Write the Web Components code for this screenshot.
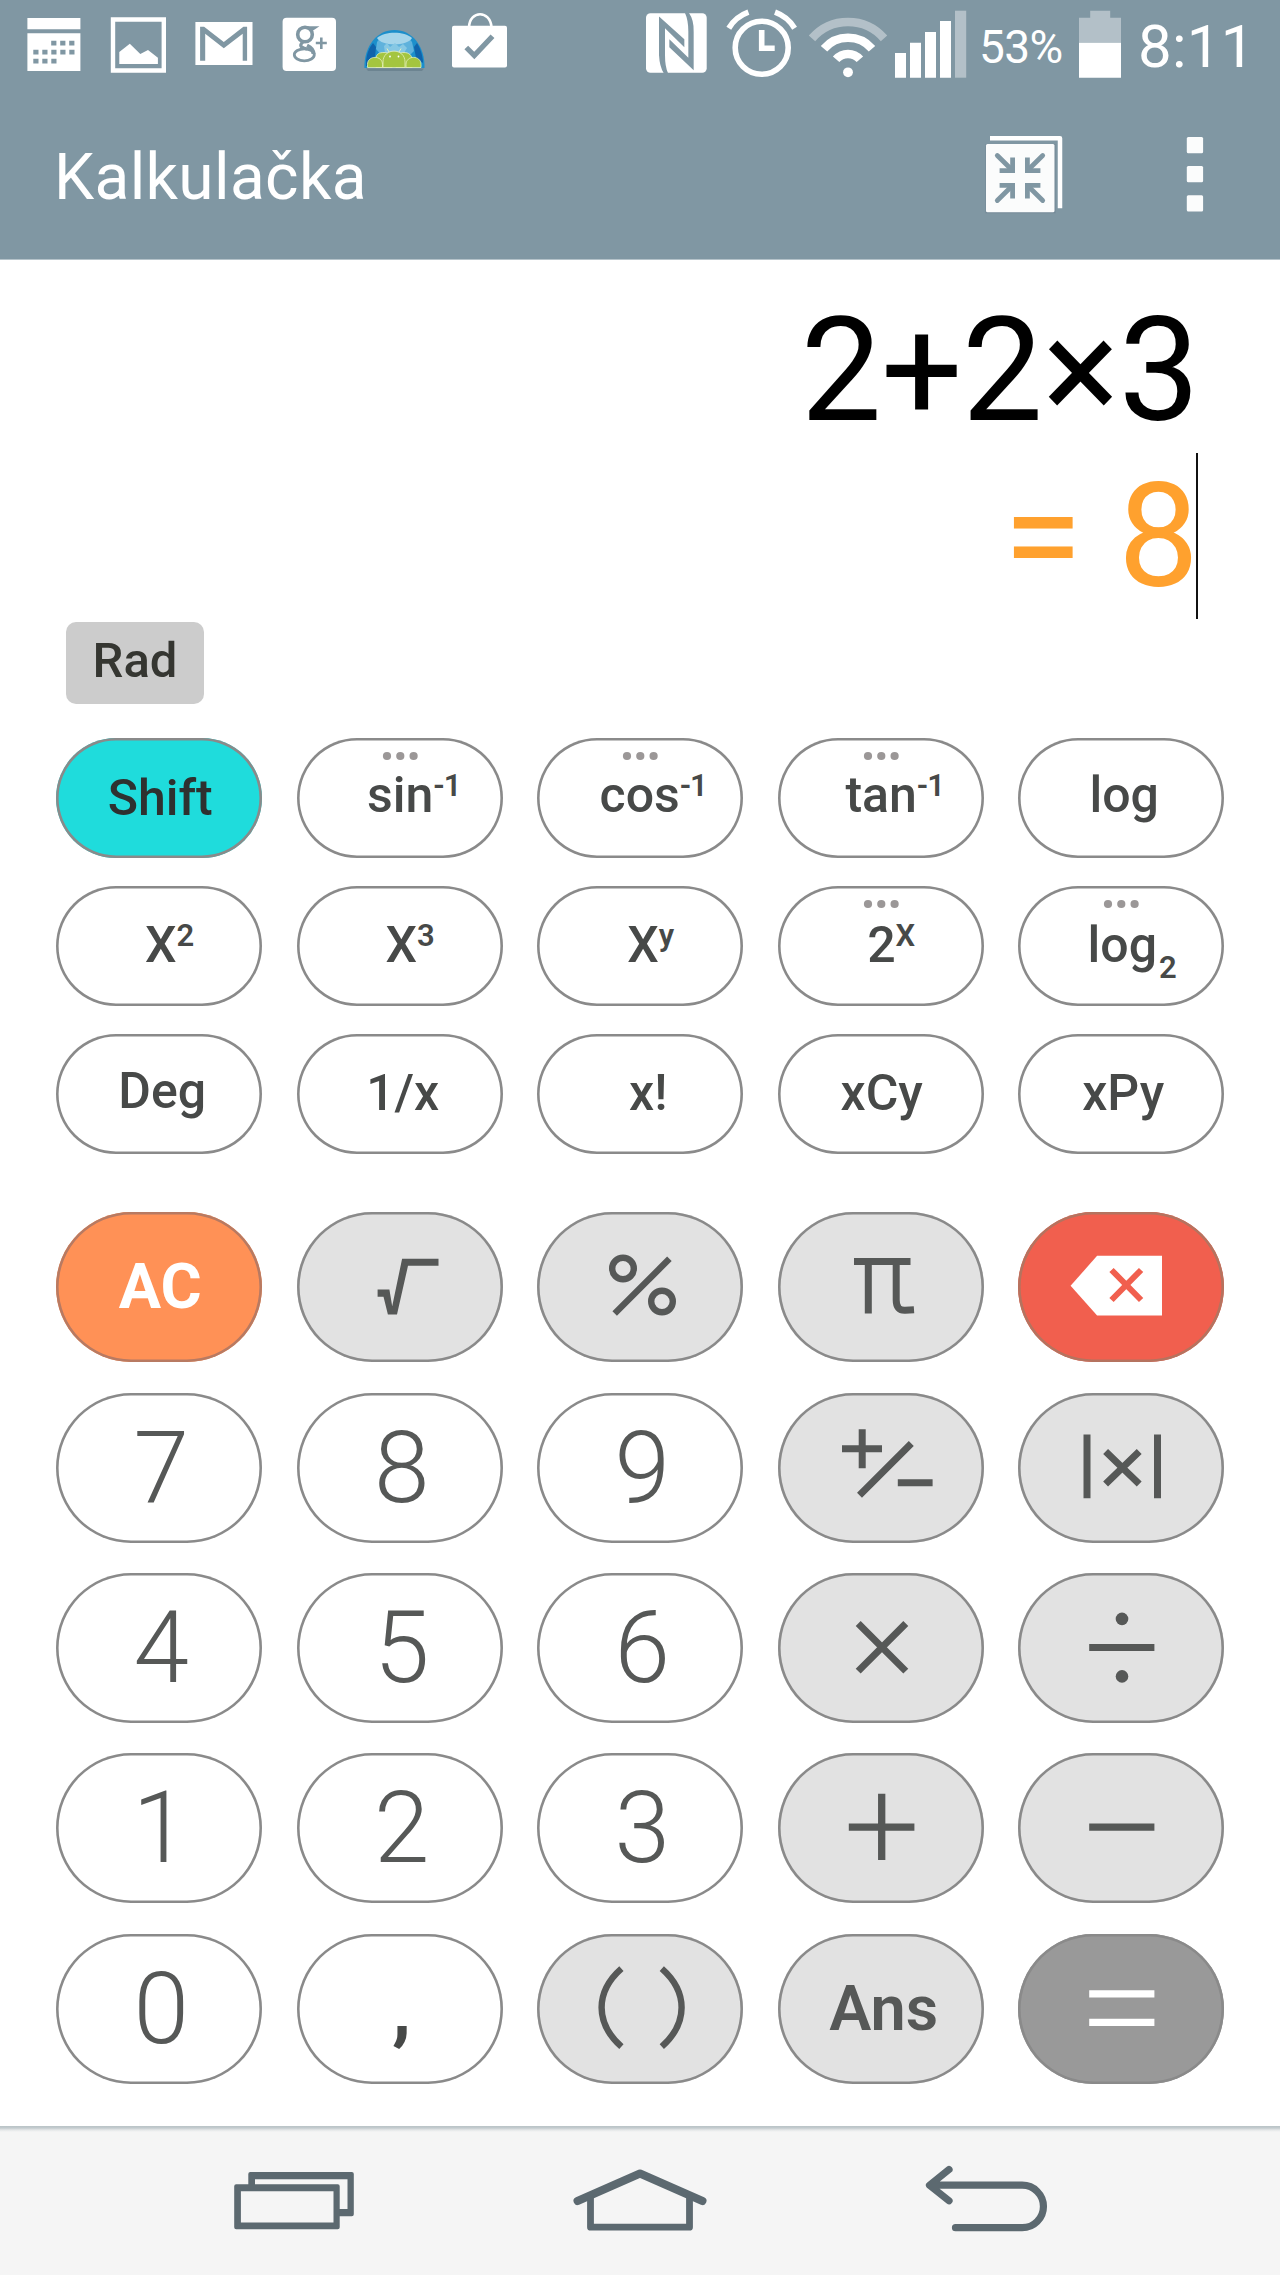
<!DOCTYPE html>
<html lang="cs">
<head>
<meta charset="utf-8">
<title>Kalkulačka</title>
<style>
  html, body {
    margin: 0;
    background: #fff;
  }
  body {
    font-family: Roboto, "Liberation Sans", sans-serif;
  }
</style>
</head>
<body>
<calc-app></calc-app>

<script>
// Each icon: [viewBox, markup]
const ICONS = {
  calendar: ["0 0 95 90", `<path fill="#fff" d="M27.4 18h53v11.3h-53zM27.4 33.2h53V71h-53z"/>
    <path stroke="#8097a3" stroke-width="4.8" stroke-dasharray="5.2 3.8" d="M51.2 43.1h24M33.3 52.1h42M33.3 61.1h23.6"/>`],
  image: ["95 0 85 90", `<path fill="none" stroke="#fff" stroke-width="4.4" d="M113 19.5h50.8v51H113z"/>
    <path fill="#fff" d="M119.3 64V52l10.5-8.3L140.3 54l7.7-4 9.9 7.7V64z"/>`],
  mail: ["180 0 87 90", `<path fill="#fff" d="M195.4 22h57.1v43h-57.1z"/>
    <path fill="#8097a3" d="M200.1 60.7v-34h4L223.8 42l19.6-15.3h3.7v34h-4.4v-27l-18.9 14.6-18.6-14.6v27z"/>`],
  gplus: ["267 0 83 90", `<rect x="282.6" y="17.7" width="53.4" height="53.3" rx="4" fill="#fff"/>
    <g fill="none" stroke="#8097a3">
      <ellipse cx="305" cy="34.5" rx="7.3" ry="7.3" stroke-width="3.6"/>
      <path stroke-width="2" d="M304 27.2h12.2l-3 2h-4"/>
      <path stroke-width="3.2" d="M303 42c-5 4 -1 6 4 7"/>
      <ellipse cx="304.3" cy="54.8" rx="10" ry="6" stroke-width="2.8"/>
      <path stroke-width="4" d="M307 45.5q6.5 3 6.5 8.5"/>
      <path stroke-width="2.6" d="M315.8 43h11M321.3 37.5v11.5"/>
    </g>`],
  androids: ["350 0 88 90", `<path fill="#58717f" opacity=".5" d="M366 68.5h58l-2 2.5h-54z"/>
    <path fill="#1c8fcb" d="M364.4 68C364 46 377 30 394.5 30s30.5 16 30 38z"/>
    <path fill="#0f63ab" d="M366 61c1-8 3-13 7-18l3 4-1 10-5 9h-4zM423 61c-1-8-3-13-6-18l-3 4 2 11 7 5z"/>
    <path fill="#5fb2dc" d="M377 42c6-9 28-10 35 0l2 9-6 6-26-1-6-7z"/>
    <path fill="#a5d5ea" d="M377 38c8-7 27-7 35 0-4 8-30 9-35 0z"/>
    <path fill="#86c8e4" d="M384 46l3-3 3 4 5-4 4 4 4-3 4 4-3 5h-19z"/>
    <g fill="#a4c53f" stroke="#e6f0bd" stroke-width=".8">
      <path d="M376 67.5V59c0-5 3-6.500 8-6.500s8 3 8 7v8zM396 67.500v-8c0-4 3-7 8-7s8 3 8 7v8z"/>
      <path d="M367.500 67.500v-3c0-9.500 15-9.500 15 0v3zM406 67.500v-3c0-9.500 15-9.500 15 0v3z"/>
      <path d="M383 67.500V62c0-14.500 22-14.500 22 0v5.500z"/>
    </g>
    <path stroke="#e6f0bd" d="M389 52l-2-3.500M399 52l2-3.500"/>
    <circle cx="390" cy="56.500" r=".9" fill="#fff"/><circle cx="398.500" cy="56.500" r=".9" fill="#fff"/>`],
  bag: ["438 0 82 90", `<rect x="452" y="25.7" width="55" height="41.8" rx="2" fill="#fff"/>
    <path fill="none" stroke="#fff" stroke-width="2.6" d="M469 27c1-17 21-17 22.5 0"/>
    <path fill="none" stroke="#8097a3" stroke-width="5.3" d="M466.3 47.5l8 8L492.5 36.2"/>`],
  nfc: ["636 0 79 90", `<rect x="646" y="13.3" width="60.7" height="59.4" rx="4.5" fill="#fff"/>
    <g transform="translate(640 5) scale(.33333)" fill="#8097a3">
      <path d="M58 35L133 103V127L75 70V150Q75 185 84 204L71 204Q59 185 57 150V35Z"/>
      <path d="M161 196L88 127V103L145 158V80Q145 45 135 24L147 24Q162 45 161 80Z"/>
    </g>`],
  alarm: ["715 0 85 90", `<g fill="none" stroke="#fff" stroke-width="5.6">
      <circle cx="761.7" cy="47.7" r="26.5"/>
      <path d="M761.7 30v18.2h13M728.8 28.2a38 38 0 0 1 19.6-16M794.6 28.2a38 38 0 0 0-19.6-16"/>
    </g>`],
  wifi: ["800 0 90 90", `<g fill="none" stroke="#fff" stroke-width="8.5">
      <path opacity=".4" d="M812 38.4a47.7 47.7 0 0 1 72 0"/>
      <path d="M824 48.8a31.8 31.8 0 0 1 48 0M836.1 59.3a15.8 15.8 0 0 1 23.8 0"/>
    </g><circle cx="848" cy="72.3" r="4.9" fill="#fff"/>`],
  signal: ["890 0 82 90", `<path fill="#fff" d="M895 53h11v24.7h-11zM910 42.7h11v35h-11zM925 32h11v45.7h-11zM940 21h11v56.7h-11z"/>
    <path fill="#fff" opacity=".4" d="M955 10.7h11.2v67H955z"/>`],
  battery: ["1072 0 56 90", `<path fill="#fff" opacity=".4" d="M1079 42.7v-25h11.2v-7h20v7h10.8v25z"/>
    <path fill="#fff" d="M1079 42.7h42v35h-42z"/>`],
  shrink: ["980 130 90 90", `<path fill="#6b8190" d="M985.5 144h70v69.3h-70z" opacity=".6"/>
    <path fill="none" stroke="#fff" stroke-width="4.5" stroke-linejoin="round" d="M990 138.3h70v70"/>
    <rect x="986" y="144" width="68.5" height="68.3" rx="1.5" fill="#fbfcfc"/>
    <g fill="none" stroke="#8097a3" stroke-width="4.8">
      ${["", "matrix(-1 0 0 1 2040 0)", "matrix(1 0 0 -1 0 356)", "matrix(-1 0 0 -1 2040 356)"]
        .map(t => `<g transform="${t}"><path stroke-linecap="round" d="M997.3 155.5L1011.5 169.5"/><path d="M1012.6 157.5v13.1h-13"/></g>`).join("")}
    </g>`],
  more: ["1180 130 30 90", `<g fill="#fbfcfc">
      <rect x="1186.8" y="137" width="16.3" height="16.2" rx="1.5"/>
      <rect x="1186.8" y="166" width="16.3" height="16.2" rx="1.5"/>
      <rect x="1186.8" y="195.3" width="16.3" height="16.2" rx="1.5"/>
    </g>`],

  // keypad symbols share the 206x150 box of their key
  sqrt: ["0 0 206 150", `<path fill="#565857" d="M80.6 77.5h11.8l2.8 16.7 9.9-47.4h36.4v7H111l-11 48.7h-9.1l-4.4-17.7h-5.9z"/>`],
  percent: ["0 0 206 150", `<g fill="none" stroke="#565857" stroke-width="6.4">
      <circle cx="86" cy="56.5" r="10.8"/><circle cx="125" cy="89.5" r="10.8"/>
      <path d="M77.7 101.5L132.4 46.8"/></g>`],
  pi: ["0 0 206 150", `<path fill="none" stroke="#565857" stroke-width="7" d="M76 49.5h56.5M90.3 50v51.5M118.2 50v38q0 10.8 9 10.3l8.800-.6"/>`],
  erase: ["0 0 206 150", `<path fill="#fff" d="M52.6 73.8l26.500-30H144v59.700H79.100z"/>
    <path stroke="#f15f4e" stroke-width="6" d="M93.500 58l29.600 30M123.100 58l-29.600 30"/>`],
  sign: ["0 0 206 150", `<path fill="none" stroke="#565857" stroke-width="7" d="M64 55.8h40M84.2 36.3v39M81.5 102.3L133.3 50.6M119.8 89.7h34.8"/>`],
  abs: ["0 0 206 150", `<path stroke="#565857" stroke-width="7" d="M69 41.6v63.7M139.5 41.6v63.7M87.6 58.5l33.6 32.6M121.2 58.5L87.6 91.1"/>`],
  times: ["0 0 206 150", `<path stroke="#565857" stroke-width="7" d="M80.2 50.5l47.6 47.6M127.8 50.5L80.2 98.1"/>`],
  divide: ["0 0 206 150", `<g fill="#565857"><circle cx="104" cy="45.9" r="6.3"/><circle cx="104" cy="103.4" r="6.3"/><path d="M71.2 71h65.2v7H71.2z"/></g>`],
  plus: ["0 0 206 150", `<path stroke="#565857" stroke-width="7.3" d="M70.8 74.2h65.6M103.7 40.8V107"/>`],
  minus: ["0 0 206 150", `<path stroke="#565857" stroke-width="7.3" d="M71.2 74.2h65.2"/>`],
  equals: ["0 0 206 150", `<path stroke="#fff" stroke-width="7.3" d="M71.2 59.9h65.2M71.2 88.4h65.2"/>`],
  parens: ["0 0 206 150", `<path fill="none" stroke="#565857" stroke-width="6.4" d="M84.4 34.6C58 58 58 89 84.4 112.7M124.8 34.6C151.2 58 151.2 89 124.8 112.7"/>`],

  recents: ["224 2156 140 90", `<g fill="#5c6970" fill-rule="evenodd">
      <path d="M250.3 2172h101.5q2 0 2 2v40.2q0 2-2 2H338v-7.2h9.5v-29.8h-92.500v6.800h-6.700v-12q0-2 2-2z"/>
      <path d="M236.2 2184.3h101.5q2 0 2 2v41q0 2-2 2H236.200q-2 0-2-2v-41q0-2 2-2zm4.700 6.900v31.200h92.600v-31.200z"/>
    </g>`],
  home: ["565 2156 150 90", `<g fill="none" stroke="#5c6970">
      <path stroke-width="8" stroke-linecap="round" stroke-linejoin="round" d="M577.5 2201L640 2173.5 702.5 2201"/>
      <path stroke-width="6.8" stroke-linejoin="round" d="M590.5 2197v30.2h99V2197"/></g>`],
  back: ["916 2156 140 90", `<path fill="none" stroke="#5c6970" stroke-width="7.2" stroke-linecap="round" stroke-linejoin="round"
      d="M949 2169.5l-19.5 15.7 19.5 15.6M930 2185.2h92.2a21.25 21.25 0 0 1 0 42.5H955.5"/>`],
};

class CalcIcon extends HTMLElement {
  constructor() {
    super();
    this._shadowRoot = this.attachShadow({ mode: "open" });
  }

  connectedCallback() {
    const [box, markup] = ICONS[this.getAttribute("name")];
    const [, , w, h] = box.split(" ");
    this._shadowRoot.innerHTML = `
      <style>
        :host { display: block; flex: none; }
        svg { display: block; }
      </style>
      <svg width="${w}" height="${h}" viewBox="${box}" aria-hidden="true">${markup}</svg>
    `;
  }
}
customElements.define("calc-icon", CalcIcon);

class StatusBar extends HTMLElement {
  constructor() {
    super();
    this.attachShadow({ mode: "open" }).innerHTML = `
      <style>
        :host { display: flex; height: 90px; color: #fff; }
        .right { display: flex; margin-left: auto; }
        .percent, .time { box-sizing: border-box; white-space: nowrap; }
        .percent { width: 100px; padding: 24px 0 0 7px; font-size: 46px; line-height: 46px; letter-spacing: -0.6px; }
        .time { width: 152px; padding: 17px 0 0 10px; font-size: 60px; line-height: 60px; letter-spacing: 0.3px; }
      </style>
      <calc-icon name="calendar"></calc-icon>
      <calc-icon name="image"></calc-icon>
      <calc-icon name="mail"></calc-icon>
      <calc-icon name="gplus"></calc-icon>
      <calc-icon name="androids"></calc-icon>
      <calc-icon name="bag"></calc-icon>
      <div class="right">
        <calc-icon name="nfc"></calc-icon>
        <calc-icon name="alarm"></calc-icon>
        <calc-icon name="wifi"></calc-icon>
        <calc-icon name="signal"></calc-icon>
        <div class="percent">53%</div>
        <calc-icon name="battery"></calc-icon>
        <div class="time">8:11</div>
      </div>
    `;
  }
}
customElements.define("status-bar", StatusBar);

class ActionBar extends HTMLElement {
  constructor() {
    super();
    this.attachShadow({ mode: "open" }).innerHTML = `
      <style>
        :host { display: flex; align-items: flex-start; height: 170px; box-sizing: border-box; padding: 40px 70px 0 54px; color: #fff; border-bottom: 1px solid #b5c3ca; }
        h1 { margin: 16px auto 0 0; font-size: 64px; line-height: 64px; font-weight: 400; letter-spacing: 0.35px; }
        .actions { display: flex; gap: 110px; }
      </style>
      <h1><slot></slot></h1>
      <div class="actions">
        <calc-icon name="shrink"></calc-icon>
        <calc-icon name="more"></calc-icon>
      </div>
    `;
  }
}
customElements.define("action-bar", ActionBar);

class CalcDisplay extends HTMLElement {
  constructor() {
    super();
    this.attachShadow({ mode: "open" }).innerHTML = `
      <style>
        :host { display: flex; flex-direction: column; align-items: flex-end; height: 362px; box-sizing: border-box; padding: 27px 82px 0 0; font-size: 144px; line-height: 166px; white-space: pre; }
        .expr { color: #000; padding-right: 2px; letter-spacing: -0.6px; }
        .result { color: #ffa12e; border-right: 2px solid #111; }
        span { display: block; transform: translate(3px, 1px); }
      </style>
      <div class="expr"><span><slot name="expr"></slot></span></div>
      <div class="result"><span><slot name="result"></slot></span></div>
    `;
  }
}
customElements.define("calc-display", CalcDisplay);

class CalcKey extends HTMLElement {
  constructor() {
    super();
    this._shadowRoot = this.attachShadow({ mode: "open" });
  }

  connectedCallback() {
    const icon = this.getAttribute("icon");
    const x = this.getAttribute("x") || 0;
    const y = this.getAttribute("y") || 0;
    this._shadowRoot.innerHTML = `
      <style>
        :host {
          --ring: #8a8a8a;
          display: grid;
          place-items: center;
          width: 206px;
          height: 150px;
          border-radius: 75px;
          box-shadow: inset 0 0 0 2.6px var(--ring);
          background: #fff;
          color: #565857;
          font-size: 100px;
          font-weight: 300;
          line-height: 1;
        }
        :host([small]) { height: 120px; border-radius: 60px; color: #474948; font-size: 50px; font-weight: 500; }
        :host([kind="op"]) { background: #e2e2e2; }
        :host([kind="word"]) { background: #e2e2e2; font-size: 63px; font-weight: 600; }
        :host([kind="shift"]) { background: #1fdcdc; color: #2e3130; }
        :host([kind="clear"]) { --ring: #b87a62; background: #ff9156; color: #fff; font-size: 63px; font-weight: 700; }
        :host([kind="erase"]) { --ring: #b5735f; background: #f15f4e; }
        :host([kind="equals"]) { background: #999; }
        :host([kind="comma"]) { color: #474948; font-size: 78px; font-weight: 700; }
        span, svg, calc-icon { grid-area: 1 / 1; }
        span { transform: translate(${x}px, ${y}px); white-space: nowrap; }
        svg { align-self: start; margin-top: 13px; }
      </style>
      ${icon ? `<calc-icon name="${icon}"></calc-icon>` : `<span><slot></slot></span>`}
      ${this.hasAttribute("dots") ? `<svg width="40" height="10" fill="#9b9797"><circle cx="7" cy="5" r="4.1"/><circle cx="20.3" cy="5" r="4.1"/><circle cx="33.6" cy="5" r="4.1"/></svg>` : ""}
    `;
  }
}
customElements.define("calc-key", CalcKey);

class CalcPad extends HTMLElement {
  constructor() {
    super();
    this.attachShadow({ mode: "open" }).innerHTML = `
      <style>
        :host { display: grid; grid-template-columns: repeat(5, 206px); column-gap: 34.5px; row-gap: 30.3px; padding-left: 56.2px; }
        :host([small]) { row-gap: 28.3px; }
      </style>
      <slot></slot>
    `;
  }
}
customElements.define("calc-pad", CalcPad);

class NavBar extends HTMLElement {
  constructor() {
    super();
    this.attachShadow({ mode: "open" }).innerHTML = `
      <style>
        :host { display: flex; height: 149px; box-sizing: border-box; padding: 30px 0 0 224px; background: linear-gradient(#b9c3c7 0, #c3cbce 2px, #e4e7e8 4px, #f5f5f5 6px); }
        .home { margin-left: 201px; }
        .back { margin-left: 201px; }
      </style>
      <calc-icon name="recents"></calc-icon>
      <calc-icon class="home" name="home"></calc-icon>
      <calc-icon class="back" name="back"></calc-icon>
    `;
  }
}
customElements.define("nav-bar", NavBar);

class CalcApp extends HTMLElement {
  constructor() {
    super();
    this.attachShadow({ mode: "open" }).innerHTML = `
      <style>
        :host { display: flex; flex-direction: column; width: 1280px; height: 2275px; background: #fff; }
        header { background: #8097a3; }
        .mode { align-self: flex-start; box-sizing: border-box; width: 138px; height: 82px; margin: 0 0 33.6px 66px; padding-top: 14px; border-radius: 10px; background: #ccc; color: #353631; font-size: 49px; font-weight: 500; line-height: 49px; text-align: center; }
        .main { margin-top: 58.2px; }
        nav-bar { margin-top: auto; }
        sup, sub { font-size: 31px; font-weight: 600; line-height: 0; }
        sup { vertical-align: 16.5px; letter-spacing: -1px; }
        sub { vertical-align: -16.5px; margin-left: 2px; }
      </style>
      <header>
        <status-bar></status-bar>
        <action-bar>Kalkulačka</action-bar>
      </header>
      <calc-display><span slot="expr">2+2×3</span><span slot="result">= 8</span></calc-display>
      <div class="mode">Rad</div>
      <calc-pad small>
        <calc-key small kind="shift" x="1">Shift</calc-key>
        <calc-key small dots x="14" y="-3">sin<sup>-1</sup></calc-key>
        <calc-key small dots x="13" y="-3">cos<sup>-1</sup></calc-key>
        <calc-key small dots x="14" y="-3">tan<sup>-1</sup></calc-key>
        <calc-key small x="3" y="-3">log</calc-key>
        <calc-key small x="10" y="-1">X<sup>2</sup></calc-key>
        <calc-key small x="10" y="-1">X<sup>3</sup></calc-key>
        <calc-key small x="10" y="-1">X<sup>y</sup></calc-key>
        <calc-key small dots x="10" y="-1">2<sup>X</sup></calc-key>
        <calc-key small dots x="11" y="-1">log<sub>2</sub></calc-key>
        <calc-key small x="3" y="-3">Deg</calc-key>
        <calc-key small x="3" y="-1">1/x</calc-key>
        <calc-key small x="8" y="-1">x!</calc-key>
        <calc-key small x="1" y="-1">xCy</calc-key>
        <calc-key small x="2" y="-1">xPy</calc-key>
      </calc-pad>
      <calc-pad class="main">
        <calc-key kind="clear" x="1" y="-1">AC</calc-key>
        <calc-key kind="op" icon="sqrt" aria-label="√"></calc-key>
        <calc-key kind="op" icon="percent" aria-label="%"></calc-key>
        <calc-key kind="op" icon="pi" aria-label="π"></calc-key>
        <calc-key kind="erase" icon="erase" aria-label="⌫"></calc-key>
        <calc-key x="2">7</calc-key>
        <calc-key x="2">8</calc-key>
        <calc-key x="2">9</calc-key>
        <calc-key kind="op" icon="sign" aria-label="+/−"></calc-key>
        <calc-key kind="op" icon="abs" aria-label="|×|"></calc-key>
        <calc-key x="2">4</calc-key>
        <calc-key x="2">5</calc-key>
        <calc-key x="2">6</calc-key>
        <calc-key kind="op" icon="times" aria-label="×"></calc-key>
        <calc-key kind="op" icon="divide" aria-label="÷"></calc-key>
        <calc-key x="1">1</calc-key>
        <calc-key x="2">2</calc-key>
        <calc-key x="2">3</calc-key>
        <calc-key kind="op" icon="plus" aria-label="+"></calc-key>
        <calc-key kind="op" icon="minus" aria-label="−"></calc-key>
        <calc-key x="2">0</calc-key>
        <calc-key kind="comma" x="2">,</calc-key>
        <calc-key kind="op" icon="parens" aria-label="( )"></calc-key>
        <calc-key kind="word" x="3">Ans</calc-key>
        <calc-key kind="equals" icon="equals" aria-label="="></calc-key>
      </calc-pad>
      <nav-bar></nav-bar>
    `;
  }
}
customElements.define("calc-app", CalcApp);
</script>
</body>
</html>
